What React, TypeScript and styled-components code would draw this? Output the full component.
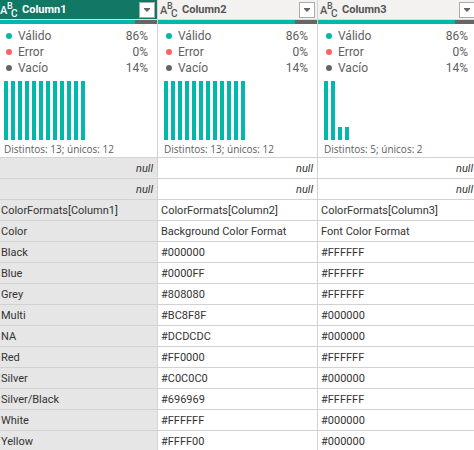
import React from "react";
import styled, { createGlobalStyle } from "styled-components";

const GlobalStyle = createGlobalStyle`
  *, *::before, *::after { box-sizing: border-box; }
  body { margin: 0; background: #ffffff; overflow: hidden; }
`;

const line = "#d2d2d2";
const teal = "#01b8aa";
const gray = "#666666";

const Viewport = styled.main`
  overflow: hidden;
  color: #333333;
  font-family: Roboto, "Open Sans", sans-serif;
  font-size: 11px;
  line-height: 16px;
`;

const Grid = styled.table`
  width: calc(100% + 6px);
  margin-left: -2px;
  table-layout: fixed;
  border-collapse: separate;
  border-spacing: 0;
`;

const HeaderCell = styled.th<{ $selected: boolean }>`
  padding: 0;
  border-right: 1px solid ${line};
  border-bottom: 1px solid ${(p) => (p.$selected ? "#d5e8e4" : "#d9d9d9")};
  background: ${(p) => (p.$selected ? "#117865" : "#f3f2f1")};
  color: ${(p) => (p.$selected ? "#ffffff" : "#555555")};
`;

const HeaderContent = styled.div`
  display: flex;
  align-items: center;
  height: 19px;
  padding: 0 2px;
`;

const TypeIcon = styled.svg`
  flex: none;
  width: 18px;
  height: 19px;
  margin-right: 4px;
  overflow: visible;
  fill: currentColor;
  font-size: 10px;
  font-weight: 500;
`;

const Title = styled.span`
  flex: 1;
  text-align: left;
  font-size: 11px;
  font-weight: 700;
`;

const FilterButton = styled.button`
  display: flex;
  align-items: center;
  justify-content: center;
  width: 16px;
  height: 16px;
  padding: 0;
  border: 1px solid #ababab;
  background: #ffffff;
  color: #666666;
`;

const ProfileCell = styled.td`
  padding: 0;
  vertical-align: top;
  border-right: 1px solid ${line};
  border-bottom: 1px solid ${line};
  color: #606060;
`;

const QualityBar = styled.div`
  display: grid;
  grid-template-columns: 86fr 14fr;
  height: 4px;
`;

const Segment = styled.span<{ $color: string }>`
  background: ${(p) => p.$color};
`;

const StatList = styled.ul`
  margin: 0;
  padding: 4px 9px 5px 8px;
  list-style: none;
  font-size: 12px;
`;

const Stat = styled.li`
  display: flex;
  align-items: center;
  gap: 6px;
  height: 16px;
`;

const Dot = styled.span<{ $color: string }>`
  width: 6px;
  height: 6px;
  border-radius: 50%;
  background: ${(p) => p.$color};
`;

const StatValue = styled.span`
  margin-left: auto;
`;

const Chart = styled.svg`
  display: block;
  margin-left: 6px;
  fill: ${teal};
`;

const Summary = styled.p`
  margin: 0;
  padding: 1px 6px 0;
  font-family: "Open Sans", sans-serif;
  font-size: 10px;
  white-space: nowrap;
`;

const Cell = styled.td<{ $selected: boolean; $empty: boolean }>`
  height: 21px;
  padding: 2px ${(p) => (p.$empty ? 4 : 3)}px 0 3px;
  border-right: 1px solid ${line};
  border-bottom: 1px solid ${line};
  background: ${(p) => (p.$selected ? "#e6e6e6" : "#ffffff")};
  text-align: ${(p) => (p.$empty ? "right" : "left")};
  font-style: ${(p) => (p.$empty ? "italic" : "normal")};
  white-space: nowrap;
`;

const columns = [
  { name: "Column1", summary: "Distintos: 13; únicos: 12", bars: Array<number>(12).fill(59) },
  { name: "Column2", summary: "Distintos: 13; únicos: 12", bars: Array<number>(12).fill(59) },
  { name: "Column3", summary: "Distintos: 5; únicos: 2", bars: [59, 59, 13, 13] },
];

const stats = [
  { label: "Válido", value: "86%", color: teal },
  { label: "Error", value: "0%", color: "#fd625e" },
  { label: "Vacío", value: "14%", color: gray },
];

const rows: (string | null)[][] = [
  [null, null, null],
  [null, null, null],
  ["ColorFormats[Column1]", "ColorFormats[Column2]", "ColorFormats[Column3]"],
  ["Color", "Background Color Format", "Font Color Format"],
  ["Black", "#000000", "#FFFFFF"],
  ["Blue", "#0000FF", "#FFFFFF"],
  ["Grey", "#808080", "#FFFFFF"],
  ["Multi", "#BC8F8F", "#000000"],
  ["NA", "#DCDCDC", "#000000"],
  ["Red", "#FF0000", "#FFFFFF"],
  ["Silver", "#C0C0C0", "#000000"],
  ["Silver/Black", "#696969", "#FFFFFF"],
  ["White", "#FFFFFF", "#000000"],
  ["Yellow", "#FFFF00", "#000000"],
];

function TextTypeIcon() {
  return (
    <TypeIcon viewBox="0 0 18 19" aria-hidden="true">
      <text>
        <tspan x="0" y="14" fontSize="11">A</tspan>
        <tspan x="7" y="9" fontSize="9">B</tspan>
        <tspan x="11" y="17">C</tspan>
      </text>
    </TypeIcon>
  );
}

function Distribution({ bars }: { bars: number[] }) {
  return (
    <Chart width="88" height="59" viewBox="0 0 88 59" aria-hidden="true">
      {bars.map((height, i) => (
        <rect key={i} x={i * 7} y={59 - height} width="4" height={height} />
      ))}
    </Chart>
  );
}

export default function App() {
  return (
    <Viewport>
      <GlobalStyle />
      <Grid>
        <thead>
          <tr>
            {columns.map((column, i) => (
              <HeaderCell key={column.name} scope="col" $selected={i === 0}>
                <HeaderContent>
                  <TextTypeIcon />
                  <Title>{column.name}</Title>
                  <FilterButton type="button" aria-label={`Filtrar ${column.name}`}>
                    <svg width="6" height="4" viewBox="0 0 6 4" fill="currentColor" aria-hidden="true">
                      <path d="M0 0h6v1L3 4 0 1z" />
                    </svg>
                  </FilterButton>
                </HeaderContent>
              </HeaderCell>
            ))}
          </tr>
          <tr>
            {columns.map((column) => (
              <ProfileCell key={column.name}>
                <QualityBar>
                  <Segment $color={teal} />
                  <Segment $color={gray} />
                </QualityBar>
                <StatList>
                  {stats.map((stat) => (
                    <Stat key={stat.label}>
                      <Dot $color={stat.color} />
                      <span>{stat.label}</span>
                      <StatValue>{stat.value}</StatValue>
                    </Stat>
                  ))}
                </StatList>
                <Distribution bars={column.bars} />
                <Summary>{column.summary}</Summary>
              </ProfileCell>
            ))}
          </tr>
        </thead>
        <tbody>
          {rows.map((row, r) => (
            <tr key={r}>
              {row.map((value, c) => (
                <Cell key={c} $selected={c === 0} $empty={value === null}>
                  {value ?? "null"}
                </Cell>
              ))}
            </tr>
          ))}
        </tbody>
      </Grid>
    </Viewport>
  );
}
